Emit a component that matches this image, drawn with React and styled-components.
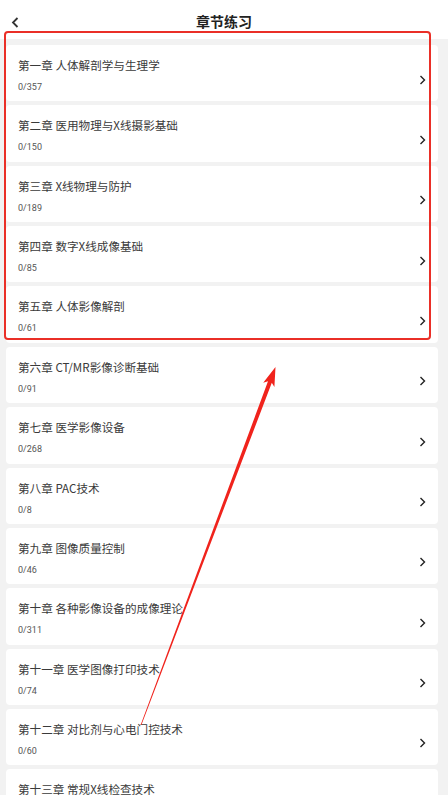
import React from "react";
import styled, { createGlobalStyle } from "styled-components";

const Global = createGlobalStyle`
  html, body { margin: 0; padding: 0; background: #f2f2f2; }
  body { font-family: "Noto Sans CJK SC", "Noto Sans", Roboto, sans-serif; }
  * { box-sizing: border-box; }
`;

const Page = styled.div`
  position: relative;
  width: 448px;
  min-height: 795px;
  background: #f2f2f2;
`;

const Header = styled.header`
  height: 39px;
  background: #fff;
  display: flex;
  align-items: center;
  justify-content: center;
  position: relative;
`;

const BackBtn = styled.div`
  position: absolute;
  left: 11px;
  top: 17px;
  width: 8px;
  height: 11px;
  display: flex;
`;

const Title = styled.h1`
  margin: 0;
  font-size: 14px;
  font-weight: 700;
  color: #222;
  line-height: 20px;
  padding-top: 2px;
`;

const List = styled.div`
  display: flex;
  flex-direction: column;
  gap: 4px;
  padding: 6px 10px 0 6px;
`;

const Card = styled.div`
  height: 56.36px;
  background: #fff;
  border-radius: 4px;
  display: flex;
  padding: 0 12px;
`;

const Info = styled.div`
  flex: 1;
  display: flex;
  flex-direction: column;
  padding-top: 12px;
`;

const ChapterName = styled.div`
  font-size: 11.6px;
  line-height: 16px;
  color: #3a3a3a;
`;

const Count = styled.div`
  margin-top: 8px;
  font-size: 9px;
  line-height: 12px;
  color: #555;
  font-family: Roboto, "Noto Sans", sans-serif;
`;

const Chevron = styled.svg`
  margin-top: 29.5px;
  flex-shrink: 0;
`;

const Highlight = styled.div`
  position: absolute;
  left: 4px;
  top: 31px;
  width: 427px;
  height: 309px;
  border: 2px solid #ea2f27;
  border-radius: 4px;
  pointer-events: none;
`;

const Overlay = styled.svg`
  position: absolute;
  left: 0;
  top: 0;
  pointer-events: none;
`;

const chapters = [
  ["第一章 人体解剖学与生理学", "0/357"],
  ["第二章 医用物理与X线摄影基础", "0/150"],
  ["第三章 X线物理与防护", "0/189"],
  ["第四章 数字X线成像基础", "0/85"],
  ["第五章 人体影像解剖", "0/61"],
  ["第六章 CT/MR影像诊断基础", "0/91"],
  ["第七章 医学影像设备", "0/268"],
  ["第八章 PAC技术", "0/8"],
  ["第九章 图像质量控制", "0/46"],
  ["第十章 各种影像设备的成像理论", "0/311"],
  ["第十一章 医学图像打印技术", "0/74"],
  ["第十二章 对比剂与心电门控技术", "0/60"],
  ["第十三章 常规X线检查技术", "0/52"],
];

export default function App() {
  return (
    <Page>
      <Global />
      <Header>
        <BackBtn>
          <svg width="8" height="11" viewBox="0 0 8 11">
            <path d="M6.5 1 L2 5.5 L6.5 10" fill="none" stroke="#333" strokeWidth="1.8" />
          </svg>
        </BackBtn>
        <Title>章节练习</Title>
      </Header>
      <List>
        {chapters.map(([name, count]) => (
          <Card key={name}>
            <Info>
              <ChapterName>{name}</ChapterName>
              <Count>{count}</Count>
            </Info>
            <Chevron width="7" height="10" viewBox="0 0 7 10">
              <path d="M1.5 1 L5.5 5 L1.5 9" fill="none" stroke="#222" strokeWidth="1.4" />
            </Chevron>
          </Card>
        ))}
      </List>
      <Highlight />
      <Overlay width="448" height="795" viewBox="0 0 448 795">
        <polygon
          fill="#f0231c"
          points="140.6,724.9 268.0,381.3 263.2,382.7 275.5,367 274.4,386.9 271.8,382.7 141.4,725.1"
        />
      </Overlay>
    </Page>
  );
}
